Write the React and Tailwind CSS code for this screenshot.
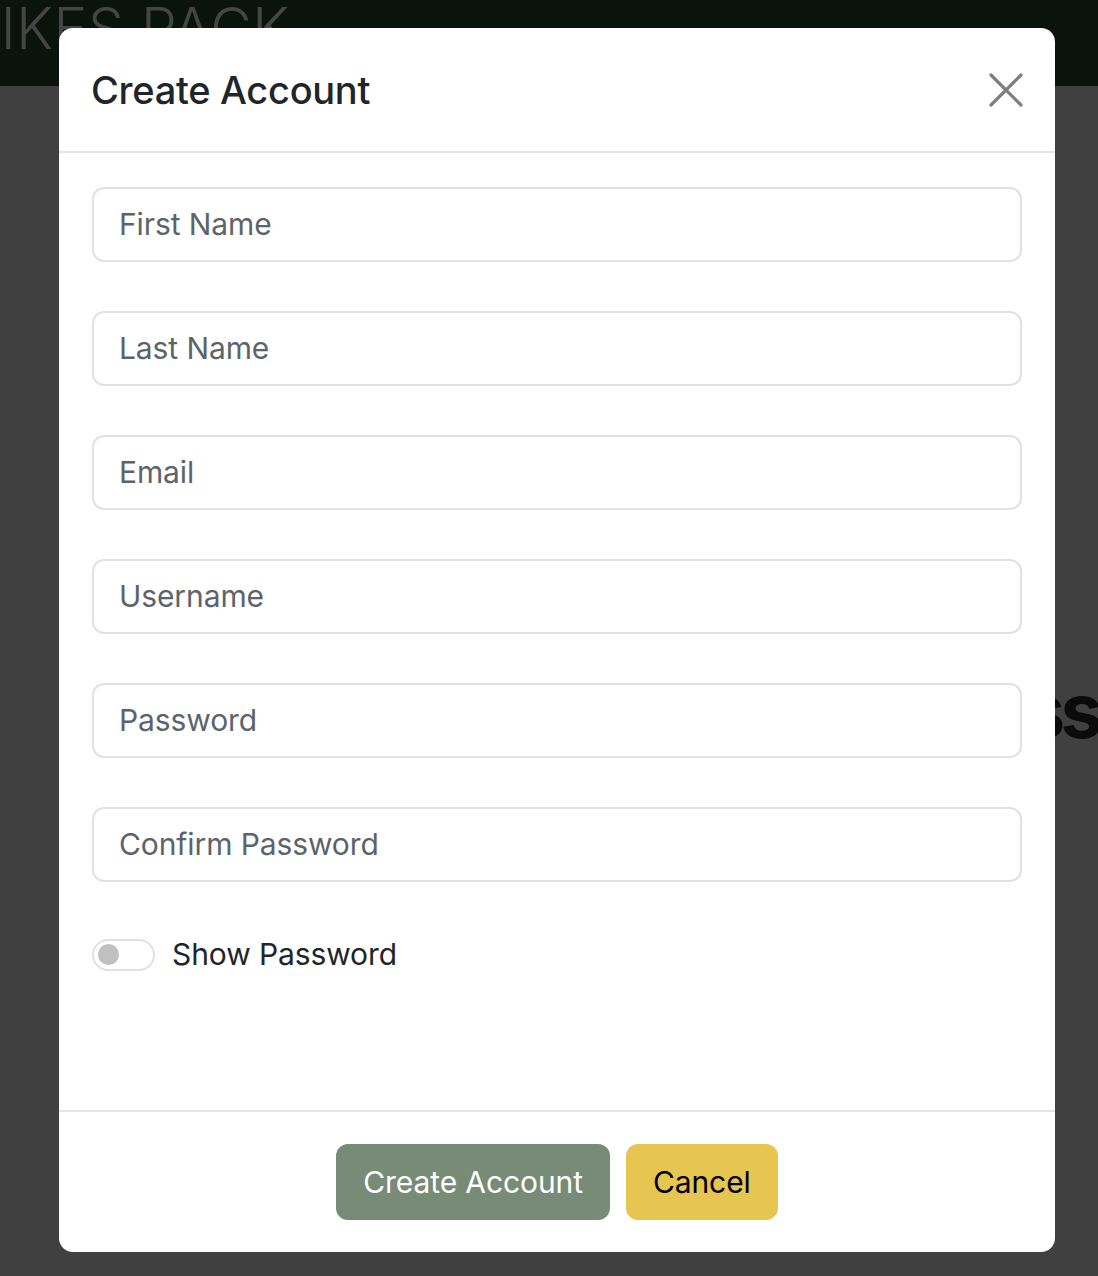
import React from "react";

const fields = ["First Name", "Last Name", "Email", "Username", "Password", "Confirm Password"];

export default function App() {
  return (
    <div className="relative w-[1098px] h-[1276px] overflow-hidden bg-[#404040]" style={{ fontFamily: "Inter, 'Noto Sans', sans-serif" }}>
      <div className="h-[86px] bg-[#0a140c] overflow-hidden flex items-start">
        <div className="-ml-[42px] mt-[-6px] text-[57px] font-light tracking-[0.5px] text-[#454545] leading-[70px] whitespace-nowrap">HIKES PACK</div>
      </div>
      <div className="flex justify-end pr-[0px] pt-[574px]">
        <div className="text-[76px] font-bold tracking-[-5px] text-[#0b0b0b] leading-[100px] whitespace-nowrap">Access</div>
      </div>

      <div className="absolute left-[59px] top-[28px] w-[996px] h-[1224px] bg-white rounded-[14px] flex flex-col">
        <div className="h-[125px] flex items-center justify-between pl-[32px] pr-[32px] border-b-2 border-[#e2e5e9] shrink-0">
          <h1 className="text-[38px] font-medium text-[#212529] tracking-[-0.3px] mt-[2px]">Create Account</h1>
          <svg width="34" height="34" viewBox="0 0 34 34">
            <path d="M2 2 L32 32 M32 2 L2 32" stroke="#7f7f7f" strokeWidth="3.2" strokeLinecap="round" />
          </svg>
        </div>
        <div className="flex-1 px-[33px] pt-[34px] flex flex-col">
          <div className="flex flex-col gap-[49px]">
            {fields.map((f) => (
              <div key={f} className="h-[75px] border-2 border-[#dee2e6] rounded-[12px] flex items-center pl-[25px]">
                <span className="text-[30px] text-[#5d636a] tracking-[-0.1px]">{f}</span>
              </div>
            ))}
          </div>
          <div className="mt-[50px] flex items-center gap-[17px]">
            <div className="w-[63px] h-[32px] rounded-full border-2 border-[#dee2e6] flex items-center pl-[4px]">
              <div className="w-[21px] h-[21px] rounded-full bg-[#c0c0c0]" />
            </div>
            <span className="text-[30px] text-[#212529] tracking-[-0.1px]">Show Password</span>
          </div>
        </div>
        <div className="h-[142px] border-t-2 border-[#e2e5e9] flex items-center justify-center gap-[16px] shrink-0">
          <button className="h-[76px] px-[27px] rounded-[12px] bg-[#778b77] text-white text-[30px] tracking-[-0.1px]">Create Account</button>
          <button className="h-[76px] px-[27px] rounded-[12px] bg-[#e6c550] text-black text-[30px] tracking-[-0.1px]">Cancel</button>
        </div>
      </div>
    </div>
  );
}
